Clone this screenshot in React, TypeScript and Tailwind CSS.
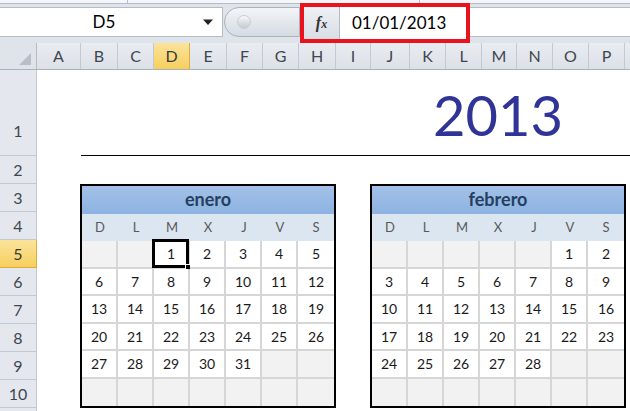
import React from "react";

const FONT = { fontFamily: "Lato, 'Open Sans', sans-serif" };

const COLS: [string, number][] = [
  ["A", 44], ["B", 37], ["C", 36], ["D", 36], ["E", 37], ["F", 36], ["G", 36],
  ["H", 37], ["I", 35], ["J", 39], ["K", 36], ["L", 36], ["M", 35], ["N", 36],
  ["O", 36], ["P", 36], ["", 36],
];

const ROWS: [string, number][] = [
  ["1", 86], ["2", 28], ["3", 28], ["4", 28], ["5", 28], ["6", 28], ["7", 28], ["8", 28], ["9", 28], ["10", 28], ["", 28],
];

const DAYS = ["D", "L", "M", "X", "J", "V", "S"];

// 6 weeks x 7 days, null where the month has no day
function monthCells(offset: number, length: number) {
  const cells: (number | null)[] = [];
  for (let i = 0; i < 42; i++) {
    const d = i - offset + 1;
    cells.push(d >= 1 && d <= length ? d : null);
  }
  return cells;
}

function Month({ name, offset, length, selected }: { name: string; offset: number; length: number; selected?: number }) {
  const cells = monthCells(offset, length);
  return (
    <div className="w-[256px] h-[224px] shrink-0 border-2 border-black grid grid-cols-[repeat(7,36px)] grid-rows-[repeat(8,27.5px)] bg-white">
      <div className="col-span-7 flex items-center justify-center bg-gradient-to-b from-[#a3c1e8] to-[#8db3e2] text-[18px] font-bold text-[#243f60]">
        {name}
      </div>
      {DAYS.map((d) => (
        <div key={d} className="flex items-center justify-center bg-[#dce6f1] text-[13px] text-[#595959]">
          {d}
        </div>
      ))}
      {cells.map((c, i) => {
        const col = i % 7;
        const row = Math.floor(i / 7);
        return (
          <div
            key={i}
            className={`relative flex items-center justify-center text-[14px] text-[#1a1a1a] border-[#d6d6d6] ${
              col < 6 ? "border-r-2" : ""
            } ${row < 5 ? "border-b-2" : ""} ${c === null ? "bg-[#f2f2f2]" : "bg-white"}`}
          >
            {c}
            {selected !== undefined && c === selected && (
              <div className="absolute -left-[2px] -top-[2px] -right-[1px] -bottom-[1px] border-[3px] border-black">
                <div className="absolute -right-[5px] -bottom-[5px] w-[6px] h-[6px] bg-black border border-white" />
              </div>
            )}
          </div>
        );
      })}
    </div>
  );
}

export default function App() {
  return (
    <div className="w-[630px] h-[411px] overflow-hidden bg-white relative" style={FONT}>
      {/* ribbon edge */}
      <div className="h-[4px] bg-[#f4f6f9] border-b border-[#b6bcc6] flex">
        <div className="w-[128px] border-r border-[#b6bcc6]" />
        <div className="w-[292px] border-r border-[#b6bcc6]" />
      </div>

      {/* name box + formula bar */}
      <div className="h-[39px] bg-[#dfe4ea] flex relative">
        <div className="w-[223px] h-[30px] mt-[3px] bg-white border border-[#b6bcc6] border-l-0 flex items-center">
          <span className="flex-1 text-center text-[17px] text-black pl-[6px]">D5</span>
          <svg width="12" height="8" viewBox="0 0 12 8" className="mr-[8px]">
            <path d="M1 1.5 L11 1.5 L6 7 Z" fill="#222" />
          </svg>
        </div>
        <div className="w-[76px] h-[30px] mt-[3px] ml-[1px] rounded-l-full bg-gradient-to-b from-[#f3f5f8] to-[#d5dbe2] border border-[#aab2bd] flex items-center pl-[12px]">
          <div className="w-[14px] h-[14px] rounded-full bg-gradient-to-b from-[#f7f8fa] to-[#c4cad2] border border-[#c9ced5]" />
        </div>
        {/* highlighted fx + value */}
        <div className="h-[40px] -mt-[1px] border-[4px] border-[#e8131d] flex bg-white">
          <div className="w-[36px] bg-gradient-to-b from-[#eef1f5] to-[#d9dee5] border-r border-[#b6bcc6] flex items-center justify-center">
            <span className="text-[16px] italic font-bold text-[#333]" style={{ fontFamily: "'Liberation Serif', serif" }}>
              f<span className="text-[12px]">x</span>
            </span>
          </div>
          <div className="w-[126px] flex items-center pl-[12px] text-[17px] text-black">01/01/2013</div>
        </div>
        <div className="flex-1 h-[30px] mt-[3px] bg-white border-y border-[#b6bcc6]" />
      </div>

      {/* column headers */}
      <div className="h-[27px] flex border-b border-[#aab2bd]">
        <div className="w-[37px] shrink-0 bg-[#dfe4ea] border-r border-[#b6bcc6] relative">
          <svg width="14" height="14" viewBox="0 0 14 14" className="absolute right-[4px] bottom-[3px]">
            <path d="M13 1 L13 13 L1 13 Z" fill="#b9bfc7" />
          </svg>
        </div>
        {COLS.map(([c, w], i) => (
          <div
            key={i}
            style={{ width: w }}
            className={`shrink-0 flex items-center justify-center text-[16px] border-r ${
              c === "D"
                ? "bg-gradient-to-b from-[#fbe39a] to-[#f6cf5c] border-[#e2a93c] text-[#3a3a3a]"
                : "bg-gradient-to-b from-[#e9edf2] to-[#dce1e7] border-[#c3c9d1] text-[#3f4650]"
            }`}
          >
            {c}
          </div>
        ))}
      </div>

      <div className="flex">
        {/* row headers */}
        <div className="w-[37px] shrink-0 flex flex-col">
          {ROWS.map(([n, h], i) => (
            <div
              key={i}
              style={{ height: h }}
              className={`shrink-0 flex justify-center text-[16px] border-b border-r ${
                n === "1" ? "items-end pb-[12px]" : "items-center"
              } ${
                n === "5"
                  ? "bg-gradient-to-b from-[#fbe39a] to-[#f6cf5c] border-[#e2a93c] text-[#3a3a3a]"
                  : "bg-[#e4e8ee] border-[#c3c9d1] text-[#3f4650]"
              }`}
            >
              {n}
            </div>
          ))}
        </div>

        {/* sheet */}
        <div className="flex-1 flex flex-col">
          <div className="h-[86px] flex">
            <div className="w-[44px] shrink-0" />
            <div className="flex-1 border-b border-black flex items-end pl-[352px] pb-[12px]">
              <span className="text-[56px] leading-none text-[#303497]">2013</span>
            </div>
          </div>
          <div className="h-[28px]" />
          <div className="flex pl-[43px] gap-[34px]">
            <Month name="enero" offset={2} length={31} selected={1} />
            <Month name="febrero" offset={5} length={28} />
          </div>
        </div>
      </div>
    </div>
  );
}
